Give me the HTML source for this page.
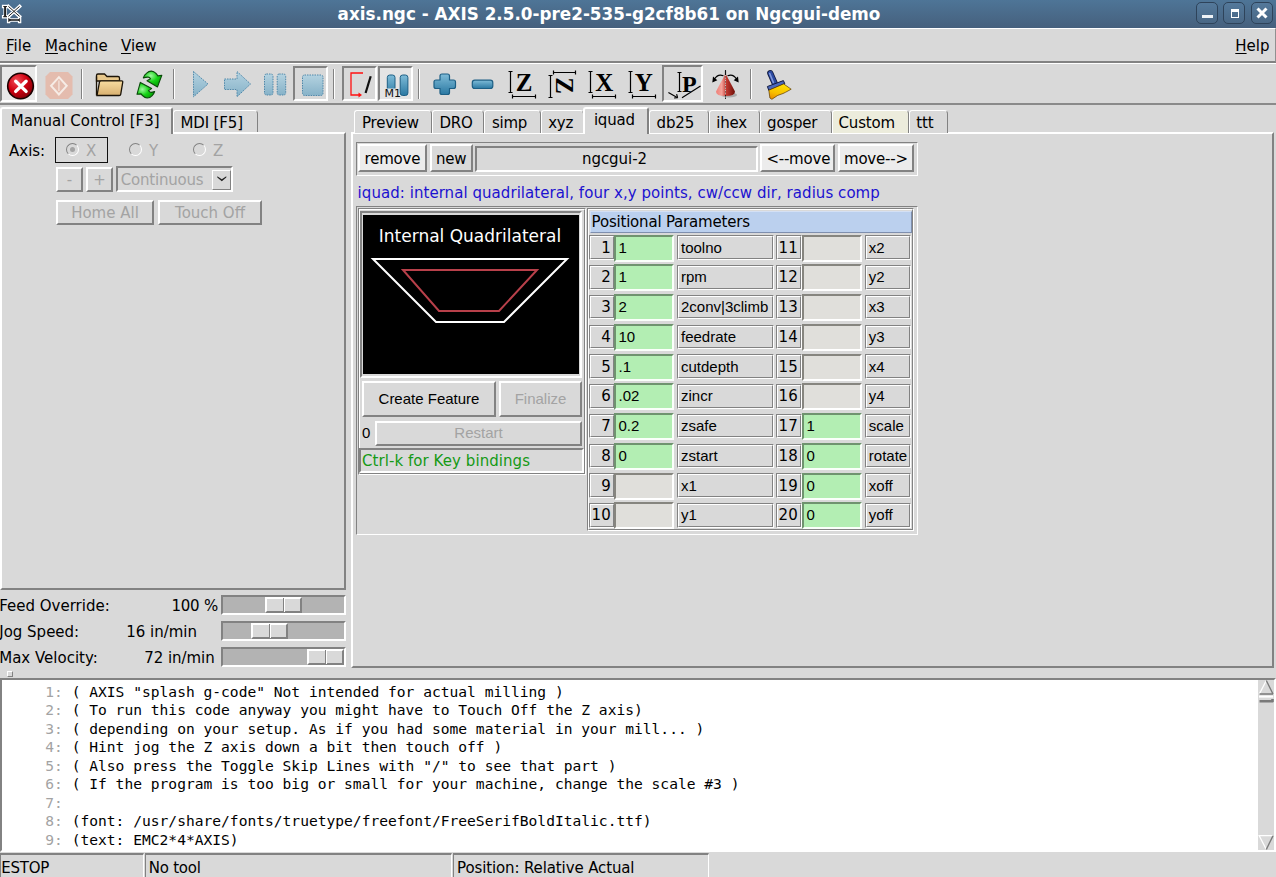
<!DOCTYPE html>
<html><head><meta charset="utf-8"><title>axis.ngc - AXIS</title>
<style>
html,body{margin:0;padding:0;}
body{width:1276px;height:877px;overflow:hidden;background:#d9d9d9;position:relative;font-family:"DejaVu Sans","Liberation Sans",sans-serif;font-size:15px;color:#000;}
div{position:absolute;box-sizing:border-box;white-space:pre;}
svg{position:absolute;overflow:visible;}
.t{font-family:"DejaVu Sans","Liberation Sans",sans-serif;font-size:15px;}
.h{font-family:"Liberation Sans","DejaVu Sans",sans-serif;font-size:15px;}
.m{font-family:"DejaVu Sans Mono","Liberation Mono",monospace;font-size:14.6px;}
.r2{border:2px solid;border-color:#fff #828282 #828282 #fff;}
.s2{border:2px solid;border-color:#828282 #fff #fff #828282;}
.r1{border:1px solid;border-color:#fff #828282 #828282 #fff;}
.s1{border:1px solid;border-color:#828282 #fff #fff #828282;}
.dis{color:#a3a3a3;}
.c{text-align:center;}
.rt{text-align:right;}
u{text-decoration:underline;text-decoration-thickness:1px;text-underline-offset:1.5px;}
</style></head>
<body>
<div class="" style="left:0px;top:0px;width:1276px;height:28px;background:linear-gradient(#4e7597,#46607d);"></div>
<div class="t" style="left:337.60px;top:-0.5px;height:28px;line-height:28px;letter-spacing:0.011px;font-weight:bold;font-size:16.8px;color:#fff;">axis.ngc - AXIS 2.5.0-pre2-535-g2cf8b61 on Ngcgui-demo</div>
<svg style="left:0;top:0" width="24" height="28" viewBox="0 0 24 28">
<g fill="none" stroke="#fff" stroke-width="3.400" stroke-linecap="square" stroke-linejoin="round"><path d="M3.600 6.500h3M5.100 6.500v10.200M3.600 16.700h3M8.400 6.400l11.200 10M19.600 6.400l-11.200 10M8.600 20h11M8.600 18.500v3M19.600 18.500v3"/></g>
<g fill="none" stroke="#222"><path d="M3.300 6.500h3.600M3.300 16.700h3.600" stroke-width="1.200"/><path d="M5.100 6.500v10.200" stroke-width="2"/><path d="M8.400 6.400l11.200 10M19.600 6.400l-11.200 10" stroke-width="1"/><path d="M9 20h10.200" stroke-width="1.600"/><path d="M8.500 18.300v3.400l2.500-1.700zM19.700 18.300v3.400l-1.500-1.700z" fill="#222" stroke-width=".5"/></g></svg>
<div class="" style="left:1196px;top:2px;width:22px;height:22px;border:1px solid #2e435a;border-radius:5px;background:linear-gradient(#54799b,#496785);"></div>
<div class="" style="left:1223px;top:2px;width:22px;height:22px;border:1px solid #2e435a;border-radius:5px;background:linear-gradient(#54799b,#496785);"></div>
<div class="" style="left:1251px;top:2px;width:22px;height:22px;border:1px solid #2e435a;border-radius:5px;background:linear-gradient(#54799b,#496785);"></div>
<div class="" style="left:1201.5px;top:15px;width:11px;height:3.3px;background:#eef2f6;"></div>
<div class="" style="left:1230.5px;top:9px;width:8px;height:8.5px;border:1.5px solid #fff;border-top-width:3px;"></div>
<svg style="left:1256px;top:7px" width="12" height="12"><path d="M1.5 1.5l9 9M10.500 1.5l-9 9" stroke="#fff" stroke-width="3" fill="none"/></svg>
<div class="" style="left:0px;top:28px;width:1276px;height:34px;border-top:1px solid #fff;border-bottom:1px solid #828282;border-right:1px solid #909090;"></div>
<div class="t" style="left:6px;top:28.5px;height:34px;line-height:34px;"><u>F</u>ile</div>
<div class="t" style="left:45px;top:28.5px;height:34px;line-height:34px;"><u>M</u>achine</div>
<div class="t" style="left:121px;top:28.5px;height:34px;line-height:34px;"><u>V</u>iew</div>
<div class="t" style="left:1235.3px;top:28.5px;height:34px;line-height:34px;"><u>H</u>elp</div>
<div class="" style="left:0px;top:62px;width:1276px;height:2px;border-top:1px solid #828282;border-bottom:1px solid #fff;"></div>
<div class="" style="left:0px;top:103px;width:1276px;height:2px;background:#8a8a8a;"></div>
<div class="s2" style="left:0px;top:65px;width:37px;height:37px;background:#e8e8e8;"></div>
<div class="s2" style="left:293px;top:66px;width:35px;height:35px;"></div>
<div class="s2" style="left:342px;top:66px;width:35px;height:35px;"></div>
<div class="s2" style="left:378px;top:66px;width:35px;height:35px;background:#e4e4e4;"></div>
<div class="s2" style="left:662px;top:65px;width:41px;height:37px;"></div>
<div class="vsep" style="left:81px;top:69px;width:2px;height:30px;border-left:1px solid #828282;border-right:1px solid #fff;"></div>
<div class="vsep" style="left:173px;top:69px;width:2px;height:30px;border-left:1px solid #828282;border-right:1px solid #fff;"></div>
<div class="vsep" style="left:333px;top:69px;width:2px;height:30px;border-left:1px solid #828282;border-right:1px solid #fff;"></div>
<div class="vsep" style="left:418px;top:69px;width:2px;height:30px;border-left:1px solid #828282;border-right:1px solid #fff;"></div>
<div class="vsep" style="left:750px;top:69px;width:2px;height:30px;border-left:1px solid #828282;border-right:1px solid #fff;"></div>
<svg style="left:0;top:0" width="1276" height="110" viewBox="0 0 1276 110">
<defs>
<radialGradient id="gred" cx="0.35" cy="0.3" r="0.8"><stop offset="0" stop-color="#f0505a"/><stop offset="0.5" stop-color="#d00010"/><stop offset="1" stop-color="#7a0008"/></radialGradient>
<linearGradient id="gblue" x1="0" y1="0" x2="0" y2="1"><stop offset="0" stop-color="#7fbcd8"/><stop offset="1" stop-color="#2a78a2"/></linearGradient>
<linearGradient id="gfold" x1="0" y1="0" x2="0" y2="1"><stop offset="0" stop-color="#f8dca0"/><stop offset="1" stop-color="#d8b070"/></linearGradient>
<radialGradient id="ggreen" cx="0.4" cy="0.3" r="0.6"><stop offset="0" stop-color="#a0f8a0"/><stop offset="0.6" stop-color="#18d418"/><stop offset="1" stop-color="#08b008"/></radialGradient><radialGradient id="ggreen2" cx="0.3" cy="0.45" r="0.6"><stop offset="0" stop-color="#a0f8a0"/><stop offset="0.6" stop-color="#18d418"/><stop offset="1" stop-color="#08b008"/></radialGradient>
<linearGradient id="gcone" x1="0" y1="0" x2="1" y2="0"><stop offset="0" stop-color="#f08078"/><stop offset="0.3" stop-color="#f4a098"/><stop offset="0.55" stop-color="#c03830"/><stop offset="1" stop-color="#701008"/></linearGradient>
<linearGradient id="gbroom" x1="0.600" y1="0" x2="0.200" y2="1"><stop offset="0" stop-color="#ffe000"/><stop offset="0.600" stop-color="#f8c000"/><stop offset="1" stop-color="#e88c00"/></linearGradient>
<linearGradient id="gdis" x1="0" y1="0" x2="0" y2="1"><stop offset="0" stop-color="#b4d2e0"/><stop offset="1" stop-color="#86b2c8"/></linearGradient></defs>
<!-- estop -->
<circle cx="20.500" cy="86" r="12.800" fill="url(#gred)" stroke="#1a0000" stroke-width="1.600"/>
<path d="M15.700 81.200l10.400 10.200M26.100 81.200l-10.400 10.200" stroke="#fff" stroke-width="3.400" stroke-linecap="round"/>
<!-- power (disabled) -->
<path d="M50 72h18l4.500 4.500v18l-4.500 4.500h-18l-4.500-4.500v-18z" fill="#e4b8a8" opacity="0.900"/>
<path d="M58.900 77.200l7.800 8.600-7.800 8.600-7.800-8.600z" fill="none" stroke="#f6ece6" stroke-width="2"/>
<path d="M58.900 80.500v10.500" stroke="#f2e0d8" stroke-width="1.500"/>
<!-- folder -->
<path d="M96.500 75.500q0-1.500 1.500-1.500h6.500l2.500 2.500h11q1.500 0 1.500 1.500v3h-23z" fill="#e8c88c" stroke="#1c1408" stroke-width="1.300"/>
<path d="M96.500 95.500v-19" stroke="#1c1408" stroke-width="1.300"/>
<path d="M97 95.500l2.500-13.500q.3-1.200 1.500-1.200h20.500q1.500 0 1.200 1.500l-2 12q-.2 1.200-1.500 1.200z" fill="url(#gfold)" stroke="#1c1408" stroke-width="1.300"/>
<!-- reload -->
<path d="M143.300 77.900Q144.500 74.500 146.400 73.400Q149 71 151.400 71.100Q154 71.300 155.500 73Q157 74.300 157.900 75.900L161.800 75.200L157.500 86.900L147 80.800L150.500 78.700Q149.500 77 148 77.100Q146 77 143.300 77.900Z" fill="url(#ggreen)" stroke="#0a4a0a" stroke-width="1.100" stroke-linejoin="round"/>
<path d="M154.600 91.500Q153.800 94.200 152.200 95.600Q150 98 147.200 98Q144.800 97.800 143.100 96Q141.800 95 141.100 93.900L137 94.300L140.300 82.400L151.600 88.600L148.500 90.600Q149.300 92 150.500 92.300Q152 92.500 154.600 91.500Z" fill="url(#ggreen2)" stroke="#0a4a0a" stroke-width="1.100" stroke-linejoin="round"/>
<!-- play (disabled) -->
<path d="M193.500 71.500L208 84L193.500 96.800z" fill="url(#gdis)" stroke="#4f88aa" stroke-width="1" stroke-dasharray="1.500 1"/>
<!-- step arrow (disabled) -->
<path d="M224.500 79h12.500v-7.500L250.500 84L237 96.800V89.500h-12.500z" fill="url(#gdis)" stroke="#4f88aa" stroke-width="1" stroke-dasharray="1.500 1"/>
<!-- pause (disabled) -->
<rect x="264.500" y="74" width="8.500" height="21" rx="2" fill="url(#gdis)" stroke="#4f88aa" stroke-width="1" stroke-dasharray="1.500 1"/>
<rect x="277.200" y="74" width="8.500" height="21" rx="2" fill="url(#gdis)" stroke="#4f88aa" stroke-width="1" stroke-dasharray="1.500 1"/>
<!-- stop (disabled) -->
<rect x="302.500" y="75" width="20.500" height="20.500" rx="2" fill="url(#gdis)" stroke="#4f88aa" stroke-width="1" stroke-dasharray="1.500 1"/>
<!-- skip lines -->
<path d="M363 73h-12v22h9" fill="none" stroke="#ff1010" stroke-width="1.300"/>
<path d="M358.500 92.500l3.500 2.500l-3.500 2.500z" fill="#ff1010"/>
<path d="M370.700 76.300L365.600 93" stroke="#111" stroke-width="2.200"/>
<!-- M1 -->
<rect x="387.300" y="75" width="7.700" height="20.500" rx="2.500" fill="url(#gblue)" stroke="#1d5f85" stroke-width="1"/>
<rect x="400.200" y="75" width="7.700" height="20.500" rx="2.500" fill="url(#gblue)" stroke="#1d5f85" stroke-width="1"/>
<rect x="384.500" y="88.500" width="13.500" height="9" fill="#e4e4e4"/>
<text x="384.500" y="97" font-family="DejaVu Sans, sans-serif" font-size="11" fill="#111">M1</text>
<!-- plus / minus -->
<path d="M442 74h5.500q2 0 2 2v4h4q2 0 2 2v4.500q0 2-2 2h-4v4q0 2-2 2H442q-2 0-2-2v-4h-4q-2 0-2-2V82q0-2 2-2h4v-4q0-2 2-2z" fill="url(#gblue)" stroke="#1d5f85" stroke-width="1.200"/>
<rect x="472.300" y="80.200" width="20.500" height="8.300" rx="2.500" fill="url(#gblue)" stroke="#1d5f85" stroke-width="1.200"/>
<!-- Z view -->
<g stroke="#000" stroke-width="1.200" fill="none">
<path d="M510.500 71.500V92.500M508.500 71.500h4M508.500 92.500h4M512.500 96.500H535.500M512.500 94.500v4M535.500 94.500v4"/>
<path d="M550.500 75.500V97.500M548.500 75.500h4M548.500 97.500h4M553.500 72.500H575.500M553.500 70.500v4M575.500 70.500v4"/>
<path d="M590.500 71.500V92.500M588.500 71.500h4M588.500 92.500h4M592.500 96.500H615.500M592.500 94.500v4M615.500 94.500v4"/>
<path d="M630.500 71.500V92.500M628.500 71.500h4M628.500 92.500h4M632.500 96.500H655.500M632.500 94.500v4M655.500 94.500v4"/>
<path d="M679.500 72.500V91.500M677.500 72.500h4M677.500 91.500h4M668.400 92.600L677.600 97.700M682 97.700L700.500 86"/>
<path d="M677.600 97.700l-1-3.500M677.600 97.700l-3.500.3"/>
</g>
<g font-family="Liberation Serif, serif" font-weight="bold" font-size="25" fill="#000" text-anchor="middle">
<text x="524" y="91.200">Z</text>
<text transform="translate(555.600,85.500) rotate(90)" x="0" y="0">Z</text>
<text x="604.200" y="91.200">X</text>
<text x="643.800" y="91.200">Y</text>
<text x="689.300" y="91.500" font-size="24">P</text>
</g>
<!-- cone -->
<ellipse cx="729" cy="95" rx="8" ry="2.500" fill="#555" opacity="0.350"/>
<path d="M725.500 73.500L735 91.500q0 4.500-9.500 4.500T716 91.500z" fill="url(#gcone)"/>
<path d="M725.500 70V100" stroke="#222" stroke-width="1" stroke-dasharray="1.500 1"/><path d="M725.500 75.200V95" stroke="#f4e0dc" stroke-width="1" stroke-dasharray="1 1.500"/>
<path d="M725.500 70.500V75" stroke="#111" stroke-width="1.200"/>
<path d="M723.500 75.800q-5.500-2.500-9 3.200M727.500 75.800q5.500-2.500 9 3.200" fill="none" stroke="#000" stroke-width="1.200"/>
<path d="M712.300 82.500l.7-6l4.300 3.800zM738.700 82.500l-.7-6l-4.300 3.800z" fill="#000"/>
<!-- broom -->
<path d="M770.300 73.200L774.600 83" stroke="#10183a" stroke-width="6.200" stroke-linecap="round"/>
<path d="M770.300 73.200L774.600 83" stroke="#2c4aa0" stroke-width="4.600" stroke-linecap="round"/>
<path d="M769.700 73.500L773.400 82.500" stroke="#8098dc" stroke-width="1.600" stroke-linecap="round"/>
<path d="M767.400 86.500L783.400 80.600L784.800 83.700L768.800 90.400z" fill="#4a68bc" stroke="#141c40" stroke-width="1"/>
<path d="M768.800 90.200L783.600 83.900L791.200 89.200L785.500 92.300L783 93.500L777.700 95.400L771.900 99.300L769.900 98z" fill="url(#gbroom)" stroke="#5a3800" stroke-width=".7" stroke-linejoin="round"/>
</svg>

<div class="r2" style="left:0px;top:132px;width:346px;height:457.5px;"></div>
<div class="" style="left:0px;top:107px;width:173px;height:27px;background:#d9d9d9;border:2px solid;border-color:#fff #828282 #d9d9d9 #fff;border-bottom:0;border-radius:3px 3px 0 0;"></div>
<div class="t" style="left:10.70px;top:107.5px;height:26px;line-height:26px;letter-spacing:0.049px;">Manual Control [F3]</div>
<div class="" style="left:173px;top:110px;width:85px;height:22px;background:#d9d9d9;border:1px solid;border-color:#fff #828282 #d9d9d9 #fff;border-bottom:0;border-radius:3px 4px 0 0;"></div>
<div class="t" style="left:180.50px;top:112px;height:22px;line-height:22px;letter-spacing:-0.146px;">MDI [F5]</div>
<div class="t" style="left:9px;top:138.5px;height:24px;line-height:24px;">Axis:</div>
<div class="" style="left:54.5px;top:137.3px;width:53.5px;height:25.4px;border:1.2px solid #111;"></div>
<div class="" style="left:65.5px;top:143.0px;width:13px;height:13px;border-radius:50%;border:1.5px solid;border-color:#828282 #fff #fff #828282;background:#d9d9d9;transform:rotate(0deg);"></div>
<div class="" style="left:69.5px;top:147.0px;width:5px;height:5px;border-radius:50%;background:#a3a3a3;"></div>
<div class="t dis" style="left:86px;top:138.5px;height:24px;line-height:24px;">X</div>
<div class="" style="left:128.5px;top:143.0px;width:13px;height:13px;border-radius:50%;border:1.5px solid;border-color:#828282 #fff #fff #828282;background:#d9d9d9;transform:rotate(0deg);"></div>
<div class="t dis" style="left:149px;top:138.5px;height:24px;line-height:24px;">Y</div>
<div class="" style="left:192.5px;top:143.0px;width:13px;height:13px;border-radius:50%;border:1.5px solid;border-color:#828282 #fff #fff #828282;background:#d9d9d9;transform:rotate(0deg);"></div>
<div class="t dis" style="left:213px;top:138.5px;height:24px;line-height:24px;">Z</div>
<div class="r2" style="left:56px;top:167px;width:27px;height:25px;"></div>
<div class="t dis c" style="left:56px;top:168px;height:25px;line-height:25px;width:27px;">-</div>
<div class="r2" style="left:86px;top:167px;width:27px;height:25px;"></div>
<div class="t dis c" style="left:86px;top:168px;height:25px;line-height:25px;width:27px;">+</div>
<div class="s2" style="left:116px;top:166px;width:117px;height:26px;"></div>
<div class="t dis" style="left:120.87px;top:168px;height:24px;line-height:24px;letter-spacing:-0.220px;">Continuous</div>
<div class="r1" style="left:212px;top:169.5px;width:19px;height:20px;border-width:1.5px;"></div>
<svg style="left:216.800px;top:175.800px" width="10" height="6"><path d="M0.300 0.300L4.800 3.200L9.300 0.300L9.300 1.600L4.800 5.200L0.300 1.600Z" fill="#222"/></svg>
<div class="r2" style="left:56px;top:200px;width:98px;height:25px;"></div>
<div class="t dis c" style="left:56px;top:201.3px;height:25px;line-height:25px;width:98px;">Home All</div>
<div class="r2" style="left:158px;top:200px;width:104px;height:25px;"></div>
<div class="t dis c" style="left:158px;top:201.3px;height:25px;line-height:25px;width:104px;">Touch Off</div>
<div class="t" style="left:-0.8px;top:593.5px;height:24px;line-height:24px;">Feed Override:</div>
<div class="t" style="left:171.48px;top:593.5px;height:24px;line-height:24px;letter-spacing:-0.220px;">100 %</div>
<div class="s2" style="left:221px;top:595px;width:125px;height:20px;background:#b3b3b3;"></div>
<div class="r2" style="left:265px;top:597px;width:37px;height:16px;background:#d9d9d9;"></div>
<div class="" style="left:283px;top:598px;width:2px;height:14px;border-left:1px solid #828282;border-right:1px solid #fff;"></div>
<div class="t" style="left:-0.8px;top:619.5px;height:24px;line-height:24px;">Jog Speed:</div>
<div class="t" style="left:126.30px;top:619.5px;height:24px;line-height:24px;letter-spacing:-0.022px;">16 in/min</div>
<div class="s2" style="left:221px;top:621px;width:125px;height:20px;background:#b3b3b3;"></div>
<div class="r2" style="left:251px;top:623px;width:37px;height:16px;background:#d9d9d9;"></div>
<div class="" style="left:269px;top:624px;width:2px;height:14px;border-left:1px solid #828282;border-right:1px solid #fff;"></div>
<div class="t" style="left:-0.8px;top:645.5px;height:24px;line-height:24px;">Max Velocity:</div>
<div class="t" style="left:144.20px;top:645.5px;height:24px;line-height:24px;letter-spacing:-0.047px;">72 in/min</div>
<div class="s2" style="left:221px;top:647px;width:125px;height:20px;background:#b3b3b3;"></div>
<div class="r2" style="left:307px;top:649px;width:37px;height:16px;background:#d9d9d9;"></div>
<div class="" style="left:325px;top:650px;width:2px;height:14px;border-left:1px solid #828282;border-right:1px solid #fff;"></div>
<div class="r1" style="left:7px;top:671px;width:6px;height:6px;"></div>
<div class="r2" style="left:351px;top:132px;width:923px;height:536px;"></div>
<div class="" style="left:354px;top:110px;width:78px;height:23px;background:#d9d9d9;border:1px solid;border-color:#fff #828282 #d9d9d9 #fff;border-bottom:0;border-radius:3px 4px 0 0;"></div>
<div class="t" style="left:362.05px;top:112px;height:22px;line-height:22px;letter-spacing:-0.220px;">Preview</div>
<div class="" style="left:432px;top:110px;width:52px;height:23px;background:#d9d9d9;border:1px solid;border-color:#fff #828282 #d9d9d9 #fff;border-bottom:0;border-radius:3px 4px 0 0;"></div>
<div class="t" style="left:439.39px;top:112px;height:22px;line-height:22px;letter-spacing:-0.220px;">DRO</div>
<div class="" style="left:484px;top:110px;width:57px;height:23px;background:#d9d9d9;border:1px solid;border-color:#fff #828282 #d9d9d9 #fff;border-bottom:0;border-radius:3px 4px 0 0;"></div>
<div class="t" style="left:491.95px;top:112px;height:22px;line-height:22px;letter-spacing:-0.220px;">simp</div>
<div class="" style="left:541px;top:110px;width:43px;height:23px;background:#d9d9d9;border:1px solid;border-color:#fff #828282 #d9d9d9 #fff;border-bottom:0;border-radius:3px 4px 0 0;"></div>
<div class="t" style="left:548.14px;top:112px;height:22px;line-height:22px;letter-spacing:-0.220px;">xyz</div>
<div class="" style="left:582.5px;top:107px;width:66.5px;height:27px;background:#d9d9d9;border:2px solid;border-color:#fff #828282 #d9d9d9 #fff;border-bottom:0;border-radius:3px 3px 0 0;"></div>
<div class="t" style="left:593.93px;top:107px;height:26px;line-height:26px;letter-spacing:-0.220px;">iquad</div>
<div class="" style="left:649px;top:110px;width:59.5px;height:23px;background:#d9d9d9;border:1px solid;border-color:#fff #828282 #d9d9d9 #fff;border-bottom:0;border-radius:3px 4px 0 0;"></div>
<div class="t" style="left:656.60px;top:112px;height:22px;line-height:22px;letter-spacing:-0.167px;">db25</div>
<div class="" style="left:708.5px;top:110px;width:51px;height:23px;background:#d9d9d9;border:1px solid;border-color:#fff #828282 #d9d9d9 #fff;border-bottom:0;border-radius:3px 4px 0 0;"></div>
<div class="t" style="left:716.33px;top:112px;height:22px;line-height:22px;letter-spacing:-0.220px;">ihex</div>
<div class="" style="left:759.5px;top:110px;width:72px;height:23px;background:#d9d9d9;border:1px solid;border-color:#fff #828282 #d9d9d9 #fff;border-bottom:0;border-radius:3px 4px 0 0;"></div>
<div class="t" style="left:767.09px;top:112px;height:22px;line-height:22px;letter-spacing:-0.220px;">gosper</div>
<div class="" style="left:831.5px;top:110px;width:77.5px;height:23px;background:#ececdc;border:1px solid;border-color:#fff #828282 #d9d9d9 #fff;border-bottom:0;border-radius:3px 4px 0 0;"></div>
<div class="t" style="left:838.50px;top:112px;height:22px;line-height:22px;letter-spacing:-0.170px;">Custom</div>
<div class="" style="left:909px;top:110px;width:39px;height:23px;background:#d9d9d9;border:1px solid;border-color:#fff #828282 #d9d9d9 #fff;border-bottom:0;border-radius:3px 4px 0 0;"></div>
<div class="t" style="left:916.36px;top:112px;height:22px;line-height:22px;letter-spacing:-0.220px;">ttt</div>
<div class="s1" style="left:356px;top:142px;width:562px;height:34px;"></div>
<div class="r2" style="left:357.5px;top:144.3px;width:69.6px;height:28.2px;background:#ececec;"></div>
<div class="t" style="left:364.59px;top:144.8px;height:28.2px;line-height:28.2px;letter-spacing:-0.220px;">remove</div>
<div class="r2" style="left:430.4px;top:144.3px;width:43px;height:28.2px;"></div>
<div class="t" style="left:435.88px;top:144.8px;height:28.2px;line-height:28.2px;letter-spacing:-0.220px;">new</div>
<div class="s2" style="left:474.8px;top:146px;width:283.6px;height:25.5px;"></div>
<div class="t" style="left:582.00px;top:145.3px;height:28px;line-height:28px;letter-spacing:-0.057px;">ngcgui-2</div>
<div class="r2" style="left:760.2px;top:144.3px;width:75px;height:28.2px;background:#ececec;"></div>
<div class="t" style="left:766.40px;top:144.8px;height:28.2px;line-height:28.2px;letter-spacing:-0.220px;">&lt;--move</div>
<div class="r2" style="left:838.4px;top:144.3px;width:75.8px;height:28.2px;background:#ececec;"></div>
<div class="t" style="left:844.00px;top:144.8px;height:28.2px;line-height:28.2px;letter-spacing:-0.220px;">move--&gt;</div>
<div class="t" style="left:357.60px;top:181px;height:24px;line-height:24px;letter-spacing:0.051px;color:#1c12d0;">iquad: internal quadrilateral, four x,y points, cw/ccw dir, radius comp</div>
<div class="s1" style="left:356px;top:206px;width:562px;height:329px;"></div>
<div class="s1" style="left:358px;top:208px;width:228px;height:267px;"></div>
<div class="r1" style="left:359px;top:209px;width:226px;height:265px;"></div>
<div class="s2" style="left:360px;top:211px;width:222px;height:167px;"></div>
<div class="" style="left:363px;top:214.5px;width:215.5px;height:159.5px;background:#000;"></div>
<svg style="left:363px;top:214px" width="216" height="160" viewBox="0 0 216 160">
<text x="107" y="28" font-family="DejaVu Sans, sans-serif" font-size="17" fill="#fff" text-anchor="middle">Internal Quadrilateral</text>
<path d="M10 45H204L141 108H73Z" fill="none" stroke="#fff" stroke-width="2"/>
<path d="M40 56H174L136 97H76Z" fill="none" stroke="#b8404a" stroke-width="2"/></svg>
<div class="r2" style="left:362px;top:381px;width:134px;height:36px;"></div>
<div class="h c" style="left:362px;top:380.5px;height:36px;line-height:36px;width:134px;">Create Feature</div>
<div class="r2" style="left:499px;top:381px;width:83px;height:36px;"></div>
<div class="h c dis" style="left:499px;top:380.5px;height:36px;line-height:36px;width:83px;">Finalize</div>
<div class="h" style="left:362px;top:420px;height:25px;line-height:25px;">0</div>
<div class="r2" style="left:375px;top:421px;width:207px;height:25px;"></div>
<div class="h c dis" style="left:375px;top:420px;height:25px;line-height:25px;width:207px;">Restart</div>
<div class="s2" style="left:359px;top:448px;width:225px;height:25px;"></div>
<div class="t" style="left:362.00px;top:449.7px;height:23px;line-height:23px;letter-spacing:0.061px;color:#159a15;">Ctrl-k for Key bindings</div>
<div class="s1" style="left:587px;top:208px;width:327px;height:323px;"></div>
<div class="r1" style="left:588px;top:209px;width:325px;height:321px;"></div>
<div class="" style="left:589.5px;top:211px;width:322px;height:21.5px;background:#bbd0ee;border:1px solid;border-color:#d4e0f4 #7f8fae #7f8fae #d4e0f4;"></div>
<div class="t" style="left:591.60px;top:209.5px;height:24px;line-height:24px;letter-spacing:-0.199px;">Positional Parameters</div>
<div class="s1" style="left:588.5px;top:235.25px;width:26px;height:24.5px;"></div>
<div class="r1" style="left:589.5px;top:236.25px;width:24px;height:22.5px;"></div>
<div class="t rt" style="left:589px;top:235.5px;height:24px;line-height:24px;width:21.7px;">1</div>
<div class="" style="left:614px;top:234.5px;width:60px;height:27px;background:#b3eeb3;border:2px solid;border-color:#6f936f #fafffa #fafffa #6f936f;"></div>
<div class="h" style="left:618.5px;top:235.5px;height:24px;line-height:24px;">1</div>
<div class="s1" style="left:677.0px;top:235.25px;width:97px;height:24.5px;"></div>
<div class="r1" style="left:678.0px;top:236.25px;width:95px;height:22.5px;"></div>
<div class="h" style="left:681.0px;top:235.5px;height:24px;line-height:24px;">toolno</div>
<div class="s1" style="left:775.5px;top:235.25px;width:26px;height:24.5px;"></div>
<div class="r1" style="left:776.5px;top:236.25px;width:24px;height:22.5px;"></div>
<div class="t rt" style="left:776px;top:235.5px;height:24px;line-height:24px;width:21.7px;">11</div>
<div class="" style="left:802px;top:234.5px;width:60px;height:27px;background:#e0dfdb;border:2px solid;border-color:#86857f #fff #fff #86857f;"></div>
<div class="s1" style="left:864.8px;top:235.25px;width:46px;height:24.5px;"></div>
<div class="r1" style="left:865.8px;top:236.25px;width:44px;height:22.5px;"></div>
<div class="h" style="left:868.8px;top:235.5px;height:24px;line-height:24px;">x2</div>
<div class="s1" style="left:588.5px;top:265.0px;width:26px;height:24.5px;"></div>
<div class="r1" style="left:589.5px;top:266.0px;width:24px;height:22.5px;"></div>
<div class="t rt" style="left:589px;top:265.25px;height:24px;line-height:24px;width:21.7px;">2</div>
<div class="" style="left:614px;top:264.25px;width:60px;height:27px;background:#b3eeb3;border:2px solid;border-color:#6f936f #fafffa #fafffa #6f936f;"></div>
<div class="h" style="left:618.5px;top:265.25px;height:24px;line-height:24px;">1</div>
<div class="s1" style="left:677.0px;top:265.0px;width:97px;height:24.5px;"></div>
<div class="r1" style="left:678.0px;top:266.0px;width:95px;height:22.5px;"></div>
<div class="h" style="left:681.0px;top:265.25px;height:24px;line-height:24px;">rpm</div>
<div class="s1" style="left:775.5px;top:265.0px;width:26px;height:24.5px;"></div>
<div class="r1" style="left:776.5px;top:266.0px;width:24px;height:22.5px;"></div>
<div class="t rt" style="left:776px;top:265.25px;height:24px;line-height:24px;width:21.7px;">12</div>
<div class="" style="left:802px;top:264.25px;width:60px;height:27px;background:#e0dfdb;border:2px solid;border-color:#86857f #fff #fff #86857f;"></div>
<div class="s1" style="left:864.8px;top:265.0px;width:46px;height:24.5px;"></div>
<div class="r1" style="left:865.8px;top:266.0px;width:44px;height:22.5px;"></div>
<div class="h" style="left:868.8px;top:265.25px;height:24px;line-height:24px;">y2</div>
<div class="s1" style="left:588.5px;top:294.75px;width:26px;height:24.5px;"></div>
<div class="r1" style="left:589.5px;top:295.75px;width:24px;height:22.5px;"></div>
<div class="t rt" style="left:589px;top:295.0px;height:24px;line-height:24px;width:21.7px;">3</div>
<div class="" style="left:614px;top:294.0px;width:60px;height:27px;background:#b3eeb3;border:2px solid;border-color:#6f936f #fafffa #fafffa #6f936f;"></div>
<div class="h" style="left:618.5px;top:295.0px;height:24px;line-height:24px;">2</div>
<div class="s1" style="left:677.0px;top:294.75px;width:97px;height:24.5px;"></div>
<div class="r1" style="left:678.0px;top:295.75px;width:95px;height:22.5px;"></div>
<div class="h" style="left:681.0px;top:295.0px;height:24px;line-height:24px;">2conv|3climb</div>
<div class="s1" style="left:775.5px;top:294.75px;width:26px;height:24.5px;"></div>
<div class="r1" style="left:776.5px;top:295.75px;width:24px;height:22.5px;"></div>
<div class="t rt" style="left:776px;top:295.0px;height:24px;line-height:24px;width:21.7px;">13</div>
<div class="" style="left:802px;top:294.0px;width:60px;height:27px;background:#e0dfdb;border:2px solid;border-color:#86857f #fff #fff #86857f;"></div>
<div class="s1" style="left:864.8px;top:294.75px;width:46px;height:24.5px;"></div>
<div class="r1" style="left:865.8px;top:295.75px;width:44px;height:22.5px;"></div>
<div class="h" style="left:868.8px;top:295.0px;height:24px;line-height:24px;">x3</div>
<div class="s1" style="left:588.5px;top:324.5px;width:26px;height:24.5px;"></div>
<div class="r1" style="left:589.5px;top:325.5px;width:24px;height:22.5px;"></div>
<div class="t rt" style="left:589px;top:324.75px;height:24px;line-height:24px;width:21.7px;">4</div>
<div class="" style="left:614px;top:323.75px;width:60px;height:27px;background:#b3eeb3;border:2px solid;border-color:#6f936f #fafffa #fafffa #6f936f;"></div>
<div class="h" style="left:618.5px;top:324.75px;height:24px;line-height:24px;">10</div>
<div class="s1" style="left:677.0px;top:324.5px;width:97px;height:24.5px;"></div>
<div class="r1" style="left:678.0px;top:325.5px;width:95px;height:22.5px;"></div>
<div class="h" style="left:681.0px;top:324.75px;height:24px;line-height:24px;">feedrate</div>
<div class="s1" style="left:775.5px;top:324.5px;width:26px;height:24.5px;"></div>
<div class="r1" style="left:776.5px;top:325.5px;width:24px;height:22.5px;"></div>
<div class="t rt" style="left:776px;top:324.75px;height:24px;line-height:24px;width:21.7px;">14</div>
<div class="" style="left:802px;top:323.75px;width:60px;height:27px;background:#e0dfdb;border:2px solid;border-color:#86857f #fff #fff #86857f;"></div>
<div class="s1" style="left:864.8px;top:324.5px;width:46px;height:24.5px;"></div>
<div class="r1" style="left:865.8px;top:325.5px;width:44px;height:22.5px;"></div>
<div class="h" style="left:868.8px;top:324.75px;height:24px;line-height:24px;">y3</div>
<div class="s1" style="left:588.5px;top:354.25px;width:26px;height:24.5px;"></div>
<div class="r1" style="left:589.5px;top:355.25px;width:24px;height:22.5px;"></div>
<div class="t rt" style="left:589px;top:354.5px;height:24px;line-height:24px;width:21.7px;">5</div>
<div class="" style="left:614px;top:353.5px;width:60px;height:27px;background:#b3eeb3;border:2px solid;border-color:#6f936f #fafffa #fafffa #6f936f;"></div>
<div class="h" style="left:618.5px;top:354.5px;height:24px;line-height:24px;">.1</div>
<div class="s1" style="left:677.0px;top:354.25px;width:97px;height:24.5px;"></div>
<div class="r1" style="left:678.0px;top:355.25px;width:95px;height:22.5px;"></div>
<div class="h" style="left:681.0px;top:354.5px;height:24px;line-height:24px;">cutdepth</div>
<div class="s1" style="left:775.5px;top:354.25px;width:26px;height:24.5px;"></div>
<div class="r1" style="left:776.5px;top:355.25px;width:24px;height:22.5px;"></div>
<div class="t rt" style="left:776px;top:354.5px;height:24px;line-height:24px;width:21.7px;">15</div>
<div class="" style="left:802px;top:353.5px;width:60px;height:27px;background:#e0dfdb;border:2px solid;border-color:#86857f #fff #fff #86857f;"></div>
<div class="s1" style="left:864.8px;top:354.25px;width:46px;height:24.5px;"></div>
<div class="r1" style="left:865.8px;top:355.25px;width:44px;height:22.5px;"></div>
<div class="h" style="left:868.8px;top:354.5px;height:24px;line-height:24px;">x4</div>
<div class="s1" style="left:588.5px;top:384.0px;width:26px;height:24.5px;"></div>
<div class="r1" style="left:589.5px;top:385.0px;width:24px;height:22.5px;"></div>
<div class="t rt" style="left:589px;top:384.25px;height:24px;line-height:24px;width:21.7px;">6</div>
<div class="" style="left:614px;top:383.25px;width:60px;height:27px;background:#b3eeb3;border:2px solid;border-color:#6f936f #fafffa #fafffa #6f936f;"></div>
<div class="h" style="left:618.5px;top:384.25px;height:24px;line-height:24px;">.02</div>
<div class="s1" style="left:677.0px;top:384.0px;width:97px;height:24.5px;"></div>
<div class="r1" style="left:678.0px;top:385.0px;width:95px;height:22.5px;"></div>
<div class="h" style="left:681.0px;top:384.25px;height:24px;line-height:24px;">zincr</div>
<div class="s1" style="left:775.5px;top:384.0px;width:26px;height:24.5px;"></div>
<div class="r1" style="left:776.5px;top:385.0px;width:24px;height:22.5px;"></div>
<div class="t rt" style="left:776px;top:384.25px;height:24px;line-height:24px;width:21.7px;">16</div>
<div class="" style="left:802px;top:383.25px;width:60px;height:27px;background:#e0dfdb;border:2px solid;border-color:#86857f #fff #fff #86857f;"></div>
<div class="s1" style="left:864.8px;top:384.0px;width:46px;height:24.5px;"></div>
<div class="r1" style="left:865.8px;top:385.0px;width:44px;height:22.5px;"></div>
<div class="h" style="left:868.8px;top:384.25px;height:24px;line-height:24px;">y4</div>
<div class="s1" style="left:588.5px;top:413.75px;width:26px;height:24.5px;"></div>
<div class="r1" style="left:589.5px;top:414.75px;width:24px;height:22.5px;"></div>
<div class="t rt" style="left:589px;top:414.0px;height:24px;line-height:24px;width:21.7px;">7</div>
<div class="" style="left:614px;top:413.0px;width:60px;height:27px;background:#b3eeb3;border:2px solid;border-color:#6f936f #fafffa #fafffa #6f936f;"></div>
<div class="h" style="left:618.5px;top:414.0px;height:24px;line-height:24px;">0.2</div>
<div class="s1" style="left:677.0px;top:413.75px;width:97px;height:24.5px;"></div>
<div class="r1" style="left:678.0px;top:414.75px;width:95px;height:22.5px;"></div>
<div class="h" style="left:681.0px;top:414.0px;height:24px;line-height:24px;">zsafe</div>
<div class="s1" style="left:775.5px;top:413.75px;width:26px;height:24.5px;"></div>
<div class="r1" style="left:776.5px;top:414.75px;width:24px;height:22.5px;"></div>
<div class="t rt" style="left:776px;top:414.0px;height:24px;line-height:24px;width:21.7px;">17</div>
<div class="" style="left:802px;top:413.0px;width:60px;height:27px;background:#b3eeb3;border:2px solid;border-color:#6f936f #fafffa #fafffa #6f936f;"></div>
<div class="h" style="left:806.5px;top:414.0px;height:24px;line-height:24px;">1</div>
<div class="s1" style="left:864.8px;top:413.75px;width:46px;height:24.5px;"></div>
<div class="r1" style="left:865.8px;top:414.75px;width:44px;height:22.5px;"></div>
<div class="h" style="left:868.8px;top:414.0px;height:24px;line-height:24px;">scale</div>
<div class="s1" style="left:588.5px;top:443.5px;width:26px;height:24.5px;"></div>
<div class="r1" style="left:589.5px;top:444.5px;width:24px;height:22.5px;"></div>
<div class="t rt" style="left:589px;top:443.75px;height:24px;line-height:24px;width:21.7px;">8</div>
<div class="" style="left:614px;top:442.75px;width:60px;height:27px;background:#b3eeb3;border:2px solid;border-color:#6f936f #fafffa #fafffa #6f936f;"></div>
<div class="h" style="left:618.5px;top:443.75px;height:24px;line-height:24px;">0</div>
<div class="s1" style="left:677.0px;top:443.5px;width:97px;height:24.5px;"></div>
<div class="r1" style="left:678.0px;top:444.5px;width:95px;height:22.5px;"></div>
<div class="h" style="left:681.0px;top:443.75px;height:24px;line-height:24px;">zstart</div>
<div class="s1" style="left:775.5px;top:443.5px;width:26px;height:24.5px;"></div>
<div class="r1" style="left:776.5px;top:444.5px;width:24px;height:22.5px;"></div>
<div class="t rt" style="left:776px;top:443.75px;height:24px;line-height:24px;width:21.7px;">18</div>
<div class="" style="left:802px;top:442.75px;width:60px;height:27px;background:#b3eeb3;border:2px solid;border-color:#6f936f #fafffa #fafffa #6f936f;"></div>
<div class="h" style="left:806.5px;top:443.75px;height:24px;line-height:24px;">0</div>
<div class="s1" style="left:864.8px;top:443.5px;width:46px;height:24.5px;"></div>
<div class="r1" style="left:865.8px;top:444.5px;width:44px;height:22.5px;"></div>
<div class="h" style="left:868.8px;top:443.75px;height:24px;line-height:24px;">rotate</div>
<div class="s1" style="left:588.5px;top:473.25px;width:26px;height:24.5px;"></div>
<div class="r1" style="left:589.5px;top:474.25px;width:24px;height:22.5px;"></div>
<div class="t rt" style="left:589px;top:473.5px;height:24px;line-height:24px;width:21.7px;">9</div>
<div class="" style="left:614px;top:472.5px;width:60px;height:27px;background:#e0dfdb;border:2px solid;border-color:#86857f #fff #fff #86857f;"></div>
<div class="s1" style="left:677.0px;top:473.25px;width:97px;height:24.5px;"></div>
<div class="r1" style="left:678.0px;top:474.25px;width:95px;height:22.5px;"></div>
<div class="h" style="left:681.0px;top:473.5px;height:24px;line-height:24px;">x1</div>
<div class="s1" style="left:775.5px;top:473.25px;width:26px;height:24.5px;"></div>
<div class="r1" style="left:776.5px;top:474.25px;width:24px;height:22.5px;"></div>
<div class="t rt" style="left:776px;top:473.5px;height:24px;line-height:24px;width:21.7px;">19</div>
<div class="" style="left:802px;top:472.5px;width:60px;height:27px;background:#b3eeb3;border:2px solid;border-color:#6f936f #fafffa #fafffa #6f936f;"></div>
<div class="h" style="left:806.5px;top:473.5px;height:24px;line-height:24px;">0</div>
<div class="s1" style="left:864.8px;top:473.25px;width:46px;height:24.5px;"></div>
<div class="r1" style="left:865.8px;top:474.25px;width:44px;height:22.5px;"></div>
<div class="h" style="left:868.8px;top:473.5px;height:24px;line-height:24px;">xoff</div>
<div class="s1" style="left:588.5px;top:503.0px;width:26px;height:24.5px;"></div>
<div class="r1" style="left:589.5px;top:504.0px;width:24px;height:22.5px;"></div>
<div class="t rt" style="left:589px;top:503.25px;height:24px;line-height:24px;width:21.7px;">10</div>
<div class="" style="left:614px;top:502.25px;width:60px;height:27px;background:#e0dfdb;border:2px solid;border-color:#86857f #fff #fff #86857f;"></div>
<div class="s1" style="left:677.0px;top:503.0px;width:97px;height:24.5px;"></div>
<div class="r1" style="left:678.0px;top:504.0px;width:95px;height:22.5px;"></div>
<div class="h" style="left:681.0px;top:503.25px;height:24px;line-height:24px;">y1</div>
<div class="s1" style="left:775.5px;top:503.0px;width:26px;height:24.5px;"></div>
<div class="r1" style="left:776.5px;top:504.0px;width:24px;height:22.5px;"></div>
<div class="t rt" style="left:776px;top:503.25px;height:24px;line-height:24px;width:21.7px;">20</div>
<div class="" style="left:802px;top:502.25px;width:60px;height:27px;background:#b3eeb3;border:2px solid;border-color:#6f936f #fafffa #fafffa #6f936f;"></div>
<div class="h" style="left:806.5px;top:503.25px;height:24px;line-height:24px;">0</div>
<div class="s1" style="left:864.8px;top:503.0px;width:46px;height:24.5px;"></div>
<div class="r1" style="left:865.8px;top:504.0px;width:44px;height:22.5px;"></div>
<div class="h" style="left:868.8px;top:503.25px;height:24px;line-height:24px;">yoff</div>
<div class="s2" style="left:0px;top:678px;width:1276px;height:174px;background:#fff;"></div>
<div class="m" style="left:1.4px;top:682.5px;height:18.5px;line-height:18.5px;"><span style="color:#a3a3a3">     1:</span> ( AXIS &quot;splash g-code&quot; Not intended for actual milling )</div>
<div class="m" style="left:1.4px;top:701.06px;height:18.5px;line-height:18.5px;"><span style="color:#a3a3a3">     2:</span> ( To run this code anyway you might have to Touch Off the Z axis)</div>
<div class="m" style="left:1.4px;top:719.62px;height:18.5px;line-height:18.5px;"><span style="color:#a3a3a3">     3:</span> ( depending on your setup. As if you had some material in your mill... )</div>
<div class="m" style="left:1.4px;top:738.18px;height:18.5px;line-height:18.5px;"><span style="color:#a3a3a3">     4:</span> ( Hint jog the Z axis down a bit then touch off )</div>
<div class="m" style="left:1.4px;top:756.74px;height:18.5px;line-height:18.5px;"><span style="color:#a3a3a3">     5:</span> ( Also press the Toggle Skip Lines with &quot;/&quot; to see that part )</div>
<div class="m" style="left:1.4px;top:775.3px;height:18.5px;line-height:18.5px;"><span style="color:#a3a3a3">     6:</span> ( If the program is too big or small for your machine, change the scale #3 )</div>
<div class="m" style="left:1.4px;top:793.86px;height:18.5px;line-height:18.5px;"><span style="color:#a3a3a3">     7:</span> </div>
<div class="m" style="left:1.4px;top:812.42px;height:18.5px;line-height:18.5px;"><span style="color:#a3a3a3">     8:</span> (font: /usr/share/fonts/truetype/freefont/FreeSerifBoldItalic.ttf)</div>
<div class="m" style="left:1.4px;top:830.98px;height:18.5px;line-height:18.5px;"><span style="color:#a3a3a3">     9:</span> (text: EMC2*4*AXIS)</div>
<div class="" style="left:1258px;top:680px;width:15.5px;height:170px;background:#d9d9d9;"></div>
<svg style="left:1258px;top:680px" width="16" height="170"><path d="M8.300 0.500L1.200 14.300H15Z" fill="#d9d9d9"/><path d="M8.300 0.500L1.200 14.300" stroke="#fff" stroke-width="1.300"/><path d="M8.300 0.500L15 14M15 14H1.500" stroke="#7a7a7a" stroke-width="1.400" fill="none"/><rect x="1" y="15.600" width="14.200" height="7.100" fill="#d9d9d9"/><path d="M1 16.600H15.200" stroke="#fff" stroke-width="2"/><path d="M1.500 21.300H15.200M14.500 19V22" stroke="#7a7a7a" stroke-width="2.600"/><path d="M1.200 155.700H15L8.300 169.500Z" fill="#d9d9d9"/><path d="M8.300 169.500L1.200 155.700H15" stroke="#fff" stroke-width="1.300" fill="none"/><path d="M15 155.700L8.300 169.500" stroke="#7a7a7a" stroke-width="1.400"/></svg>
<div class="s2" style="left:0px;top:853px;width:144px;height:27px;border-width:2px 1px 1px 1px;"></div>
<div class="t" style="left:1.27px;top:855.5px;height:24px;line-height:24px;letter-spacing:-0.220px;">ESTOP</div>
<div class="s2" style="left:145px;top:853px;width:307px;height:27px;border-width:2px 1px 1px 1px;"></div>
<div class="t" style="left:148.63px;top:855.5px;height:24px;line-height:24px;letter-spacing:-0.220px;">No tool</div>
<div class="s2" style="left:453px;top:853px;width:256px;height:27px;border-width:2px 1px 1px 1px;"></div>
<div class="t" style="left:457.00px;top:855.5px;height:24px;line-height:24px;letter-spacing:-0.123px;">Position: Relative Actual</div>
</body></html>
